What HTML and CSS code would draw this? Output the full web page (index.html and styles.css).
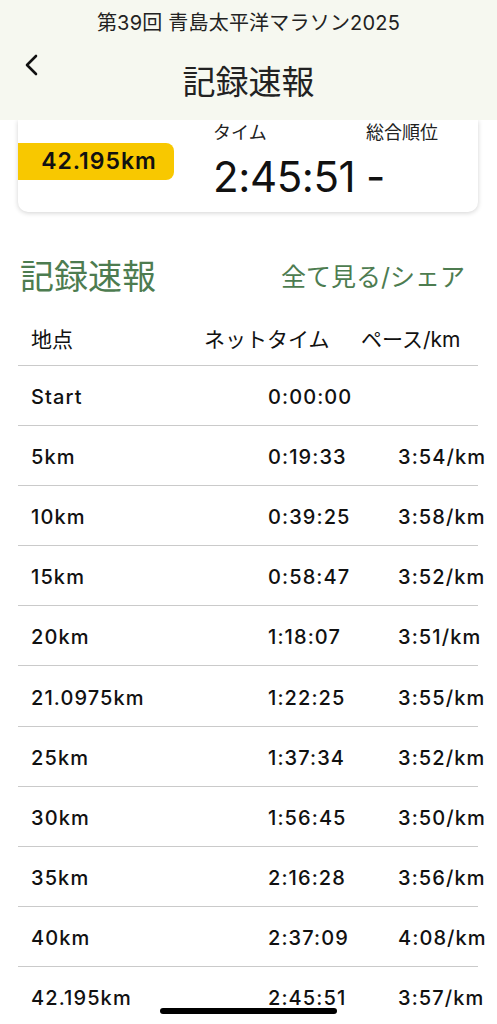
FILE: index.html
```html
<!DOCTYPE html>
<html lang="ja">
<head>
    <meta charset="UTF-8">
    <meta name="viewport" content="width=device-width, initial-scale=1.0">
    <title>記録速報</title>
    <link rel="stylesheet" href="styles.css">
</head>
<body>
    <div class="header">
        <div class="event-name">第39回 青島太平洋マラソン2025</div>
        <div class="nav">
            <svg class="back" width="16" height="22" viewBox="0 0 16 22">
                <path d="M12 2 L3 11 L12 20" fill="none" stroke="#111" stroke-width="2.6" stroke-linecap="round" stroke-linejoin="round"/>
            </svg>
            <h1>記録速報</h1>
        </div>
    </div>

    <div class="summary">
        <div class="badge">42.195km</div>
        <div class="col col-time">
            <div class="label">タイム</div>
            <div class="value">2:45:51</div>
        </div>
        <div class="col">
            <div class="label">総合順位</div>
            <div class="value">-</div>
        </div>
    </div>

    <div class="section-head">
        <h2>記録速報</h2>
        <a class="share">全て見る/シェア</a>
    </div>

    <div class="table">
        <div class="thead">
            <span>地点</span>
            <span>ネットタイム</span>
            <span>ペース/km</span>
        </div>
        <div class="row"><span>Start</span><span>0:00:00</span><span></span></div>
        <div class="row"><span>5km</span><span>0:19:33</span><span>3:54/km</span></div>
        <div class="row"><span>10km</span><span>0:39:25</span><span>3:58/km</span></div>
        <div class="row"><span>15km</span><span>0:58:47</span><span>3:52/km</span></div>
        <div class="row"><span>20km</span><span>1:18:07</span><span>3:51/km</span></div>
        <div class="row"><span>21.0975km</span><span>1:22:25</span><span>3:55/km</span></div>
        <div class="row"><span>25km</span><span>1:37:34</span><span>3:52/km</span></div>
        <div class="row"><span>30km</span><span>1:56:45</span><span>3:50/km</span></div>
        <div class="row"><span>35km</span><span>2:16:28</span><span>3:56/km</span></div>
        <div class="row"><span>40km</span><span>2:37:09</span><span>4:08/km</span></div>
        <div class="row"><span>42.195km</span><span>2:45:51</span><span>3:57/km</span></div>
    </div>

    <div class="home-bar"></div>
</body>
</html>
```

FILE: styles.css
```css
body {
    font-family: 'Inter', 'Noto Sans CJK JP', sans-serif;
    background: white;
    color: #111;
    margin: 0;
    padding: 0;
    height: 1024px;
    overflow: hidden;
    position: relative;
}
.header {
    background: #f6f8f0;
    height: 120px;
    padding-top: 9px;
    box-sizing: border-box;
    position: relative;
    z-index: 2;
}
.event-name {
    text-align: center;
    font-size: 20px;
    line-height: 28px;
    letter-spacing: 0.2px;
    color: #222;
}
.nav {
    position: relative;
    margin-top: 23px;
}
.back {
    position: absolute;
    left: 24px;
    top: -6px;
}
.nav h1 {
    margin: 0;
    text-align: center;
    font-size: 33px;
    font-weight: 400;
    line-height: 44px;
    color: #222;
}
.summary {
    display: flex;
    align-items: flex-start;
    margin: 0 19px 0 18px;
    height: 92px;
    background: white;
    border-radius: 0 0 10px 10px;
    box-shadow: 0 1px 5px rgba(0, 0, 0, 0.18);
}
.badge {
    margin-top: 23px;
    width: 156px;
    height: 37px;
    box-sizing: border-box;
    padding-left: 6px;
    background: #f8c800;
    border-radius: 0 8px 8px 0;
    font-size: 23px;
    font-weight: 600;
    letter-spacing: 1px;
    line-height: 37px;
    text-align: center;
}
.col {
    padding-top: 1px;
}
.col-time {
    margin-left: 39px;
    width: 153px;
}
.col .label {
    font-size: 18px;
    line-height: 24px;
    color: #222;
}
.col .value {
    margin-top: 7px;
    font-size: 42px;
    letter-spacing: -0.4px;
    line-height: 50px;
}
.section-head {
    display: flex;
    justify-content: space-between;
    align-items: center;
    margin: 43px 32px 0 20px;
    color: #4d7c50;
}
.section-head h2 {
    margin: 0;
    font-size: 34px;
    font-weight: 400;
    line-height: 44px;
}
.share {
    font-size: 25px;
    line-height: 44px;
}
.table {
    margin: 11px 19px 0 18px;
}
.thead, .row {
    display: grid;
    align-items: center;
    padding-left: 13px;
    white-space: nowrap;
    border-bottom: 1px solid #cacaca;
}
.thead {
    grid-template-columns: 173px 157px auto;
    height: 55px;
    font-size: 21px;
}
.row {
    grid-template-columns: 237px 130px auto;
    box-sizing: border-box;
    height: 60.1px;
    padding-top: 3px;
    font-size: 20px;
    font-weight: 500;
    letter-spacing: 1.1px;
}
.home-bar {
    position: absolute;
    left: 160px;
    bottom: 10px;
    width: 177px;
    height: 6px;
    border-radius: 3px;
    background: #000;
}
```
